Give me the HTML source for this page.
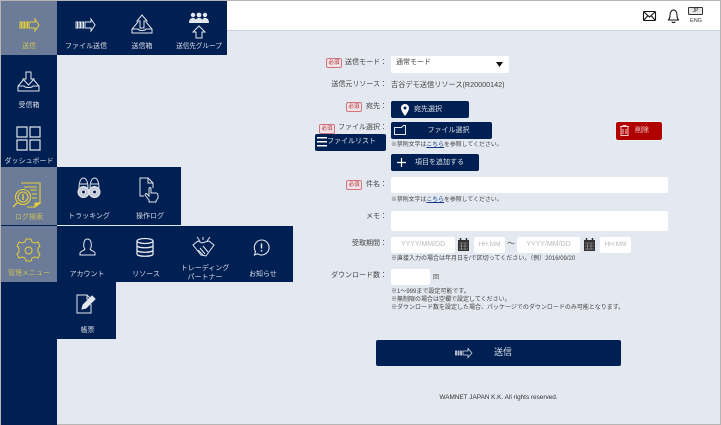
<!DOCTYPE html>
<html lang="ja"><head><meta charset="utf-8"><style>
html,body{margin:0;padding:0;width:721px;height:425px;overflow:hidden;background:#e4e8f0}
body{position:relative;font-family:"Liberation Sans","Noto Sans CJK JP",sans-serif;font-size:7px;color:#333;filter:blur(.25px)}
.a{position:absolute}
.n{position:absolute;background:#001f52}
.g{position:absolute;background:#6c7b98}
.m{position:absolute;color:#d9dde6;font-size:7px;text-align:center;white-space:nowrap;line-height:9px}
.y{color:#c9c05a}
.l{position:absolute;right:334px;text-align:right;white-space:nowrap;font-size:7px;line-height:10px;color:#444}
.t{position:absolute;white-space:nowrap;font-size:6px;line-height:8px;color:#444}
.req{position:absolute;width:14px;height:8px;border:1px solid #d0767c;border-radius:2px;background:#f0e4e8;color:#b02a30;font-size:5.5px;line-height:8px;text-align:center}
.i{position:absolute;background:#fff;border-radius:2px;box-sizing:border-box}
.ph{color:#bbb;font-size:7px;line-height:16px;text-align:center}
.b{position:absolute;background:#001f52;border-radius:2px;color:#dfe3ea;font-size:7px;line-height:18px;white-space:nowrap}
svg{position:absolute;overflow:visible;fill:none}
u{color:#123a80}
</style></head><body>
<div class="a" style="left:0;top:0;width:721px;height:31px;background:#fff;border-bottom:1px solid #ccd3e0;box-sizing:border-box"></div>
<div class="a" style="left:0;top:0;width:721px;height:1px;background:#b5b5b5"></div>
<div class="a" style="left:0;top:424px;width:721px;height:1px;background:#b5b5b5"></div>
<div class="a" style="left:0;top:0;width:1px;height:425px;background:#b5b5b5"></div>
<div class="a" style="left:720px;top:0;width:1px;height:425px;background:#b5b5b5"></div>

<div class="n" style="left:1px;top:1px;width:56px;height:424px"></div>
<div class="g" style="left:1px;top:1px;width:56px;height:54px"></div>
<div class="n" style="left:57px;top:1px;width:170px;height:54px"></div>
<div class="g" style="left:1px;top:167px;width:56px;height:58px"></div>
<div class="n" style="left:57px;top:167px;width:124px;height:58px"></div>
<div class="g" style="left:1px;top:226px;width:56px;height:56px"></div>
<div class="n" style="left:57px;top:226px;width:236px;height:56px"></div>
<div class="n" style="left:57px;top:282px;width:59px;height:57px"></div>

<!-- send icons -->
<svg style="left:19px;top:18px" width="21" height="14" stroke="#e3cf3a" stroke-width="1"><path d="M1 4h1.500v6H1zM4 4h1.500v6H4zM7 4h1.500v6H7zM10 4h6V1l4 6-4 6v-3h-6z"/></svg>
<div class="m y" style="left:1px;top:42px;width:56px">送信</div>
<svg style="left:75px;top:18px" width="21" height="14" stroke="#e4e7ee" stroke-width="1"><path d="M1 4h1.500v6H1zM4 4h1.500v6H4zM7 4h1.500v6H7zM10 4h6V1l4 6-4 6v-3h-6z"/></svg>
<div class="m" style="left:57px;top:42px;width:58px">ファイル送信</div>
<svg style="left:131px;top:14px" width="23" height="20" stroke="#e4e7ee" stroke-width="1"><path d="M11 1l5 6h-3v7H9V7H6zM7 8L1 15v4h20v-4L15 8M1 15h6c1 2 7 2 8 0h6"/></svg>
<div class="m" style="left:114px;top:42px;width:56px">送信箱</div>
<svg style="left:189px;top:12px" width="20" height="27"><g fill="#e4e7ee"><circle cx="4" cy="3" r="2.200"/><circle cx="10" cy="3" r="2.400"/><circle cx="16" cy="3" r="2.200"/><path d="M0 11c0-4 2-5 4-5s3 1 3 5zM6 11c0-4 2-5 4-5s4 1 4 5zM13 11c0-4 1-5 3-5s4 1 4 5z"/></g><path d="M10 14l6 6h-3v6H7v-6H4z" stroke="#e4e7ee"/></svg>
<div class="m" style="left:171px;top:42px;width:56px;font-size:6.600px">送信先グループ</div>

<svg style="left:17px;top:71px" width="23" height="21" stroke="#e4e7ee" stroke-width="1"><path d="M9 1h5v7h3l-5.500 6L6 8h3zM7 8L1 15v5h21v-5l-6-7M1 15h6c1 2 8 2 9 0h6"/></svg>
<div class="m" style="left:1px;top:101px;width:56px">受信箱</div>
<svg style="left:16px;top:126px" width="25" height="25" stroke="#dfe3ea" stroke-width="1.200"><path d="M1 1h10v10H1zM14 1h10v10H14zM1 14h10v10H1zM14 14h10v10H14z"/></svg>
<div class="m" style="left:1px;top:157px;width:56px">ダッシュボード</div>

<!-- log -->
<svg style="left:12px;top:180px" width="30" height="30" stroke="#e3cf3a" stroke-width="1.100"><path d="M9 3h19v20l-5 4H15M12 7h13M18 10h7M20 14h5M20 18h5"/><circle cx="11" cy="17" r="7.500" fill="#6c7b98"/><circle cx="11" cy="17" r="5"/><path d="M5 23l-4 4M11 14v6" stroke-width="1.400"/><path d="M23 27l5-4h-5z" fill="#e3cf3a"/></svg>
<div class="m y" style="left:1px;top:213px;width:56px">ログ検索</div>
<svg style="left:77px;top:176px" width="24" height="24" stroke="#e4e7ee" stroke-width="1"><path d="M2 12c0-4 1-10 4.500-10S11 8 11 12M13 12c0-4 1-10 4.500-10S22 8 22 12M3 8h7M14 8h7"/><circle cx="6.500" cy="16" r="5.500" fill="#c5cad6"/><circle cx="17.500" cy="16" r="5.500" fill="#c5cad6"/><circle cx="6.500" cy="16" r="2" fill="#001f52"/><circle cx="17.500" cy="16" r="2" fill="#001f52"/></svg>
<div class="m" style="left:58px;top:212px;width:62px">トラッキング</div>
<svg style="left:138px;top:176px" width="22" height="27" stroke="#e4e7ee" stroke-width="1"><path d="M6 20H2V2h8l5 5v5M10 2v5h5"/><path d="M11 24l-4-5c0-1 1-2 2-1l2 2v-7c0-2 2-2 2 0v4h5c1 0 2 1 2 2v3l-2 3v1h-7z" fill="#001f52"/></svg>
<div class="m" style="left:119px;top:212px;width:62px">操作ログ</div>

<!-- admin -->
<svg style="left:16px;top:238px" width="25" height="25" stroke="#e3cf3a" stroke-width="1"><path d="M10 1h5l1 3 3 1 3-1 2 4-2 2v4l2 2-2 4-3-1-3 1-1 3h-5l-1-3-3-1-3 1-2-4 2-2v-4L1 8l2-4 3 1 3-1z"/><circle cx="12.500" cy="12.500" r="3.500"/></svg>
<div class="m y" style="left:1px;top:269px;width:56px">管理メニュー</div>
<svg style="left:79px;top:238px" width="17" height="18" stroke="#e4e7ee" stroke-width="1"><path d="M1 17v-2c0-2 4-2 5-4C4 9 4 1 8.500 1S13 9 11 11c1 2 5 2 5 4v2z"/></svg>
<div class="m" style="left:57px;top:270px;width:60px">アカウント</div>
<svg style="left:136px;top:238px" width="18" height="19" stroke="#e4e7ee" stroke-width="1.300"><ellipse cx="9" cy="3" rx="8" ry="2.500"/><path d="M1 3v13c0 3 16 3 16 0V3M1 7.500c0 3 16 3 16 0M1 12c0 3 16 3 16 0"/></svg>
<div class="m" style="left:117px;top:270px;width:58px">リソース</div>
<svg style="left:192px;top:237px" width="23" height="21" stroke="#e4e7ee" stroke-width="1"><path d="M1 8l5-4 4 2 3-1 4-1 5 4-8 11-5-1zM5 0l3 4M18 0l-3 4M11 0v3"/><path d="M8 11l5 6M6 13l5 5M11 9l5 6"/></svg>
<div class="m" style="left:176px;top:264px;width:58px;line-height:9px">トレーディング<br>パートナー</div>
<svg style="left:253px;top:239px" width="17" height="17" stroke="#e4e7ee" stroke-width="1.100"><path d="M8.500 1a7.500 7.500 0 1 1-4 13.800L1.500 16l1-3.500A7.500 7.500 0 0 1 8.500 1z"/><path d="M8.500 4.500v5M8.500 11v1.500" stroke-width="1.500"/></svg>
<div class="m" style="left:234px;top:270px;width:58px">お知らせ</div>
<svg style="left:76px;top:294px" width="21" height="20" stroke="#e4e7ee" stroke-width="1"><path d="M15 10v9H1V1h10l4 4M11 1v4h4"/><path d="M6 15l1-4 9-9 3 3-9 9z" fill="#e4e7ee"/></svg>
<div class="m" style="left:58px;top:326px;width:59px">帳票</div>

<!-- header icons -->
<svg style="left:643px;top:11px" width="13" height="10" stroke="#111" stroke-width="1.100"><rect x=".5" y=".5" width="12" height="9" rx="1"/><path d="M1 1l5.500 5L12 1M1 9l4-4.500M12 9L8 4.500"/></svg>
<svg style="left:667px;top:9px" width="13" height="14" stroke="#111" stroke-width="1"><path d="M1 11c2-1 2-3 2-5s1-5 3.500-5S10 4 10 6s0 4 2 5zM5 12.500c0 1.500 3 1.500 3 0"/></svg>
<div class="a" style="left:688px;top:7px;width:13px;height:6px;border:1px solid #333;border-radius:1px;background:#e8e8e8;font-size:5px;line-height:6px;text-align:center;color:#222">JP</div>
<div class="a" style="left:686px;top:18px;width:20px;text-align:center;font-size:5.500px;line-height:7px;color:#333">ENG</div>

<!-- form -->
<div class="req" style="left:326px;top:58px">必須</div>
<div class="l" style="top:58px">送信モード：</div>
<div class="i" style="left:391px;top:56px;width:118px;height:17px"></div>
<div class="t" style="left:396px;top:59px;font-size:7px">通常モード</div>
<svg style="left:496px;top:62px" width="7" height="5"><path d="M0 0h7L3.500 5z" fill="#111"/></svg>
<div class="l" style="top:80px">送信元リソース：</div>
<div class="t" style="left:391px;top:80px;font-size:7.200px;line-height:10px">吉谷デモ送信リソース(R20000142)</div>

<div class="req" style="left:346px;top:102px">必須</div>
<div class="l" style="top:102px">宛先：</div>
<div class="b" style="left:391px;top:101px;width:78px;height:17px;line-height:17px;text-indent:23px">宛先選択</div>
<svg style="left:401px;top:104px" width="8" height="12"><path d="M4 0a4 4 0 0 1 4 4c0 3-4 8-4 8S0 7 0 4a4 4 0 0 1 4-4z" fill="#fff"/><circle cx="4" cy="4" r="1.500" fill="#001f52"/></svg>

<div class="req" style="left:319px;top:124px">必須</div>
<div class="l" style="top:123px">ファイル選択：</div>
<div class="b" style="left:391px;top:122px;width:101px;height:17px;line-height:17px;text-align:center;text-indent:14px">ファイル選択</div>
<svg style="left:394px;top:125px" width="12" height="10" stroke="#e4e7ee" stroke-width="1"><path d="M.5 2.500h7l2-2h2v9H.5z"/></svg>
<div class="b" style="left:315px;top:134px;width:71px;height:17px;line-height:16px;text-indent:12px">ファイルリスト</div>
<svg style="left:317px;top:137px" width="10" height="11"><path d="M0 0h10v1.500H0zM0 4h10v1.500H0zM0 8h10v1.500H0z" fill="#fff"/></svg>
<div class="t" style="left:391px;top:141px;font-size:5.900px">※禁則文字は<u>こちら</u>を参照してください。</div>
<div class="b" style="left:391px;top:154px;width:88px;height:17px;line-height:17px;text-indent:24px">項目を追加する</div>
<svg style="left:397px;top:158px" width="9" height="9" stroke="#fff" stroke-width="1.200"><path d="M4.500 0v9M0 4.500h9"/></svg>
<div class="b" style="left:616px;top:122px;width:46px;height:18px;background:#b00000;line-height:17px;text-indent:19px;color:#f0c8c8;outline:1px solid #eef0f4">削除</div>
<svg style="left:620px;top:125px" width="9" height="11" stroke="#f4d0d0" stroke-width="1"><path d="M0 1.500h9M3 1.500V.5h3v1M1 2v8.500h7V2M3 4v5M6 4v5"/></svg>

<div class="req" style="left:346px;top:180px">必須</div>
<div class="l" style="top:180px">件名：</div>
<div class="i" style="left:391px;top:177px;width:277px;height:16px"></div>
<div class="t" style="left:391px;top:196px;font-size:5.900px">※禁則文字は<u>こちら</u>を参照してください。</div>
<div class="l" style="top:212px">メモ：</div>
<div class="i" style="left:391px;top:211px;width:277px;height:20px"></div>
<div class="l" style="top:239px">受取期間：</div>
<div class="i ph" style="left:391px;top:237px;width:64px;height:16px">YYYY/MM/DD</div>
<svg style="left:458px;top:238px" width="11" height="13"><path d="M0 2h11v11H0z" fill="#333"/><path d="M2.500 0v3M8.500 0v3" stroke="#333" stroke-width="1.500"/><path d="M1 5h9M1 8h9M1 11h9M3.500 5v7M7 5v7" stroke="#aaa" stroke-width=".6"/></svg>
<div class="i ph" style="left:474px;top:237px;width:31px;height:16px;font-size:6.500px">HH:MM</div>
<div class="t" style="left:507px;top:240px;font-size:8px">～</div>
<div class="i ph" style="left:517px;top:237px;width:63px;height:16px">YYYY/MM/DD</div>
<svg style="left:584px;top:238px" width="11" height="13"><path d="M0 2h11v11H0z" fill="#333"/><path d="M2.500 0v3M8.500 0v3" stroke="#333" stroke-width="1.500"/><path d="M1 5h9M1 8h9M1 11h9M3.500 5v7M7 5v7" stroke="#aaa" stroke-width=".6"/></svg>
<div class="i ph" style="left:600px;top:237px;width:31px;height:16px;font-size:6.500px">HH:MM</div>
<div class="t" style="left:391px;top:255px">※直接入力の場合は年月日を/で区切ってください。（例）2016/09/20</div>
<div class="l" style="top:271px">ダウンロード数：</div>
<div class="i" style="left:391px;top:269px;width:39px;height:16px"></div>
<div class="t" style="left:433px;top:274px">回</div>
<div class="t" style="left:391px;top:288px">※1～999まで設定可能です。</div>
<div class="t" style="left:391px;top:296px">※無制限の場合は空欄で設定してください。</div>
<div class="t" style="left:391px;top:304px">※ダウンロード数を設定した場合、パッケージでのダウンロードのみ可能となります。</div>

<div class="b" style="left:376px;top:340px;width:245px;height:26px;line-height:25px;font-size:9px;text-indent:118px">送信</div>
<svg style="left:455px;top:348px" width="18" height="10" stroke="#d9dde6" stroke-width=".8"><path d="M.5 3h1v4h-1zM3 3h1v4H3zM5.500 3h1v4h-1zM8 3h5V.5L17 5l-4 4.500V7H8z"/></svg>
<div class="a" style="left:376px;top:393px;width:245px;text-align:center;font-size:6.400px;line-height:9px;color:#333">WAMNET JAPAN K.K. All rights reserved.</div>
</body></html>
